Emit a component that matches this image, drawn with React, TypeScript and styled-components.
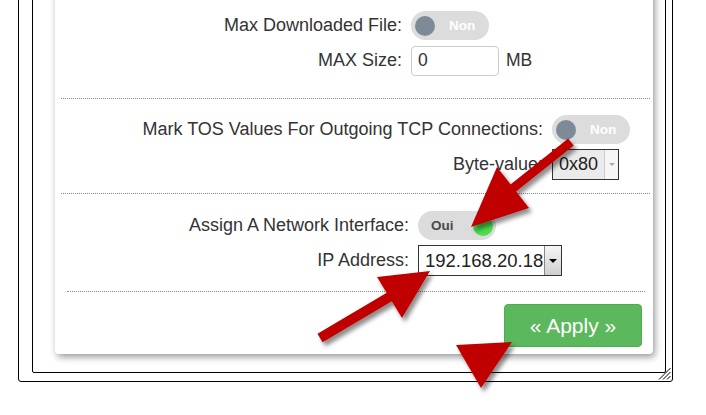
import React from 'react';
import styled, {createGlobalStyle} from 'styled-components';

const GlobalStyle = createGlobalStyle`
  html, body {
    margin: 0;
    padding: 0;
    background: #fff;
    overflow: hidden;
  }
  body {
    font-family: "Liberation Sans", Arial, sans-serif;
    color: #333;
  }
`

type RowType = {
    label: string
    control: string
}

type SectionType = {
    labelWidth: number
    padTop: number
    padBottom: number
    rows: RowType[]
}

const sections: SectionType[] = [
    {
        labelWidth: 347,
        padTop: 14,
        padBottom: 20,
        rows: [
            {label: 'Max Downloaded File:', control: 'toggle-off'},
            {label: 'MAX Size:', control: 'size'},
        ]
    },
    {
        labelWidth: 488,
        padTop: 13,
        padBottom: 11,
        rows: [
            {label: 'Mark TOS Values For Outgoing TCP Connections:', control: 'toggle-off'},
            {label: 'Byte-value:', control: 'byte'},
        ]
    },
    {
        labelWidth: 354,
        padTop: 14,
        padBottom: 13,
        rows: [
            {label: 'Assign A Network Interface:', control: 'toggle-on'},
            {label: 'IP Address:', control: 'ip'},
        ]
    },
]

const Switch = ({on}: { on: boolean }) => (
    <SwitchTrack $on={on}>
        <SwitchKnob $on={on}/>
        <SwitchText $on={on}>{on ? 'Oui' : 'Non'}</SwitchText>
    </SwitchTrack>
)

const renderControl = (kind: string) => {
    switch (kind) {
        case 'toggle-off':
            return <Switch on={false}/>
        case 'toggle-on':
            return <Switch on={true}/>
        case 'size':
            return (
                <>
                    <SizeInput defaultValue="0"/>
                    <Unit>MB</Unit>
                </>
            )
        case 'byte':
            return (
                <FakeSelect $w={67} $bg={'#ebebeb'}>
                    <SelectValue $size={18}>0x80</SelectValue>
                    <SelectButton $w={13} $dark={false}><Caret $dark={false}/></SelectButton>
                </FakeSelect>
            )
        case 'ip':
            return (
                <FakeSelect $w={144} $bg={'#fff'}>
                    <SelectValue $size={18.5}>192.168.20.18</SelectValue>
                    <SelectButton $w={16} $dark={true}><Caret $dark={true}/></SelectButton>
                </FakeSelect>
            )
        default:
            return null
    }
}

const Arrows = () => (
    <Overlay width={706} height={415} viewBox="0 0 706 415">
        <defs>
            <filter id="arrowShadow" x="-20%" y="-20%" width="150%" height="150%">
                <feDropShadow dx="3" dy="4" stdDeviation="2" floodColor="#000" floodOpacity="0.45"/>
            </filter>
        </defs>
        <g filter="url(#arrowShadow)" fill="#c00000" stroke="none">
            <line x1={571} y1={142} x2={512} y2={189} stroke="#c00000" strokeWidth={9}/>
            <polygon points="497,167 529,208 471,227"/>
            <line x1={320} y1={338} x2={391} y2={296} stroke="#c00000" strokeWidth={10}/>
            <polygon points="377,277 402,318 430,271"/>
            <polygon points="456,345 512,342 481,388"/>
        </g>
    </Overlay>
)

export default function App() {
    return (
        <>
            <GlobalStyle/>
            <OuterFrame>
                <InnerFrame>
                    <Card>
                        {sections.map((s, i) => (
                            <React.Fragment key={i}>
                                <Section $padTop={s.padTop} $padBottom={s.padBottom}>
                                    {s.rows.map(r => (
                                        <Row key={r.label} $labelWidth={s.labelWidth}>
                                            <Label>{r.label}</Label>
                                            <Control>{renderControl(r.control)}</Control>
                                        </Row>
                                    ))}
                                </Section>
                                <Divider $left={i === 2 ? 12 : 6} $right={i === 2 ? 8 : 3}/>
                            </React.Fragment>
                        ))}
                        <Footer>
                            <ApplyButton>« Apply »</ApplyButton>
                        </Footer>
                    </Card>
                </InnerFrame>
                <Grip width={13} height={13} viewBox="0 0 13 13">
                    <g stroke="#000" strokeWidth={1}>
                        <line x1={1} y1={12.5} x2={12.5} y2={1}/>
                        <line x1={5} y1={12.5} x2={12.5} y2={5}/>
                        <line x1={9} y1={12.5} x2={12.5} y2={9}/>
                    </g>
                </Grip>
            </OuterFrame>
            <Arrows/>
        </>
    )
}

const OuterFrame = styled.div`
  position: relative;
  box-sizing: border-box;
  width: 655px;
  margin: -40px 0 0 18px;
  padding: 8px 6px 8px 13px;
  border: 1px solid #000;
  border-radius: 0 0 3px 3px;
`

const InnerFrame = styled.div`
  padding: 18px 12px 18px 22px;
  border: 1px solid #000;
  border-radius: 0 0 2px 2px;
`

const Card = styled.div`
  background: #fff;
  border-radius: 4px;
  padding-top: 6px;
  box-shadow: 2px 3px 7px rgba(0, 0, 0, 0.4);
`

const Section = styled.div<{ $padTop: number, $padBottom: number }>`
  padding-top: ${p => p.$padTop}px;
  padding-bottom: ${p => p.$padBottom}px;
`

const Row = styled.div<{ $labelWidth: number }>`
  display: grid;
  grid-template-columns: ${p => p.$labelWidth}px auto;
  column-gap: 9px;
  align-items: center;
  height: 35px;
`

const Label = styled.div`
  text-align: right;
  white-space: nowrap;
  font-size: 18px;
  color: #333;
`

const Control = styled.div`
  display: flex;
  align-items: center;
`

const Divider = styled.div<{ $left: number, $right: number }>`
  margin: 0 ${p => p.$right}px 0 ${p => p.$left}px;
  border-top: 1px dotted #888;
`

const SwitchTrack = styled.div<{ $on: boolean }>`
  display: flex;
  flex-direction: ${p => p.$on ? 'row-reverse' : 'row'};
  align-items: center;
  box-sizing: border-box;
  width: 78px;
  height: 29px;
  padding: ${p => p.$on ? '0 3px 0 13px' : '0 4px'};
  border-radius: 15px;
  background: #dcdcdc;
`

const SwitchKnob = styled.div<{ $on: boolean }>`
  width: 20px;
  height: 20px;
  border-radius: 50%;
  background: ${p => p.$on ? '#4cdc4c' : '#7d8a98'};
  margin-left: ${p => p.$on ? 'auto' : '0'};
`

const SwitchText = styled.span<{ $on: boolean }>`
  margin-left: ${p => p.$on ? '0' : '14px'};
  font-size: 13.5px;
  font-weight: bold;
  color: ${p => p.$on ? '#4a4a4a' : '#fff'};
`

const SizeInput = styled.input`
  box-sizing: border-box;
  width: 88px;
  height: 30px;
  padding: 0 6px;
  border: 1px solid #ccc;
  border-radius: 4px;
  font-family: "Liberation Sans", Arial, sans-serif;
  font-size: 17.5px;
  color: #333;
  outline: none;
`

const Unit = styled.span`
  margin-left: 7px;
  font-size: 17.5px;
  color: #333;
`

const FakeSelect = styled.div<{ $w: number, $bg: string }>`
  display: flex;
  box-sizing: border-box;
  width: ${p => p.$w}px;
  height: 31px;
  border: 1px solid #333;
  background: ${p => p.$bg};
`

const SelectValue = styled.div<{ $size: number }>`
  flex: 1;
  min-width: 0;
  display: flex;
  align-items: center;
  padding-left: 6px;
  font-size: ${p => p.$size}px;
  color: #222;
  white-space: nowrap;
`

const SelectButton = styled.div<{ $w: number, $dark: boolean }>`
  display: flex;
  flex: none;
  align-items: center;
  justify-content: center;
  width: ${p => p.$w}px;
  border-left: 1px solid ${p => p.$dark ? '#888' : '#ccc'};
  background: ${p => p.$dark ? 'linear-gradient(#f6f6f6, #cfcfcf)' : '#f6f6f6'};
`

const Caret = styled.div<{ $dark: boolean }>`
  width: 0;
  height: 0;
  border-left: ${p => p.$dark ? 4 : 3}px solid transparent;
  border-right: ${p => p.$dark ? 4 : 3}px solid transparent;
  border-top: ${p => p.$dark ? 4 : 3}px solid ${p => p.$dark ? '#000' : '#aaa'};
`

const Footer = styled.div`
  display: flex;
  justify-content: flex-end;
  padding: 12px 11px 7px 0;
`

const ApplyButton = styled.button`
  width: 138px;
  height: 43px;
  border: 1px solid #4cae4c;
  border-radius: 4px;
  background: #5cb85c;
  color: #fff;
  font-family: "Liberation Sans", Arial, sans-serif;
  font-size: 21px;
`

const Grip = styled.svg`
  position: absolute;
  right: 1px;
  bottom: 1px;
`

const Overlay = styled.svg`
  position: fixed;
  top: 0;
  left: 0;
  pointer-events: none;
`
